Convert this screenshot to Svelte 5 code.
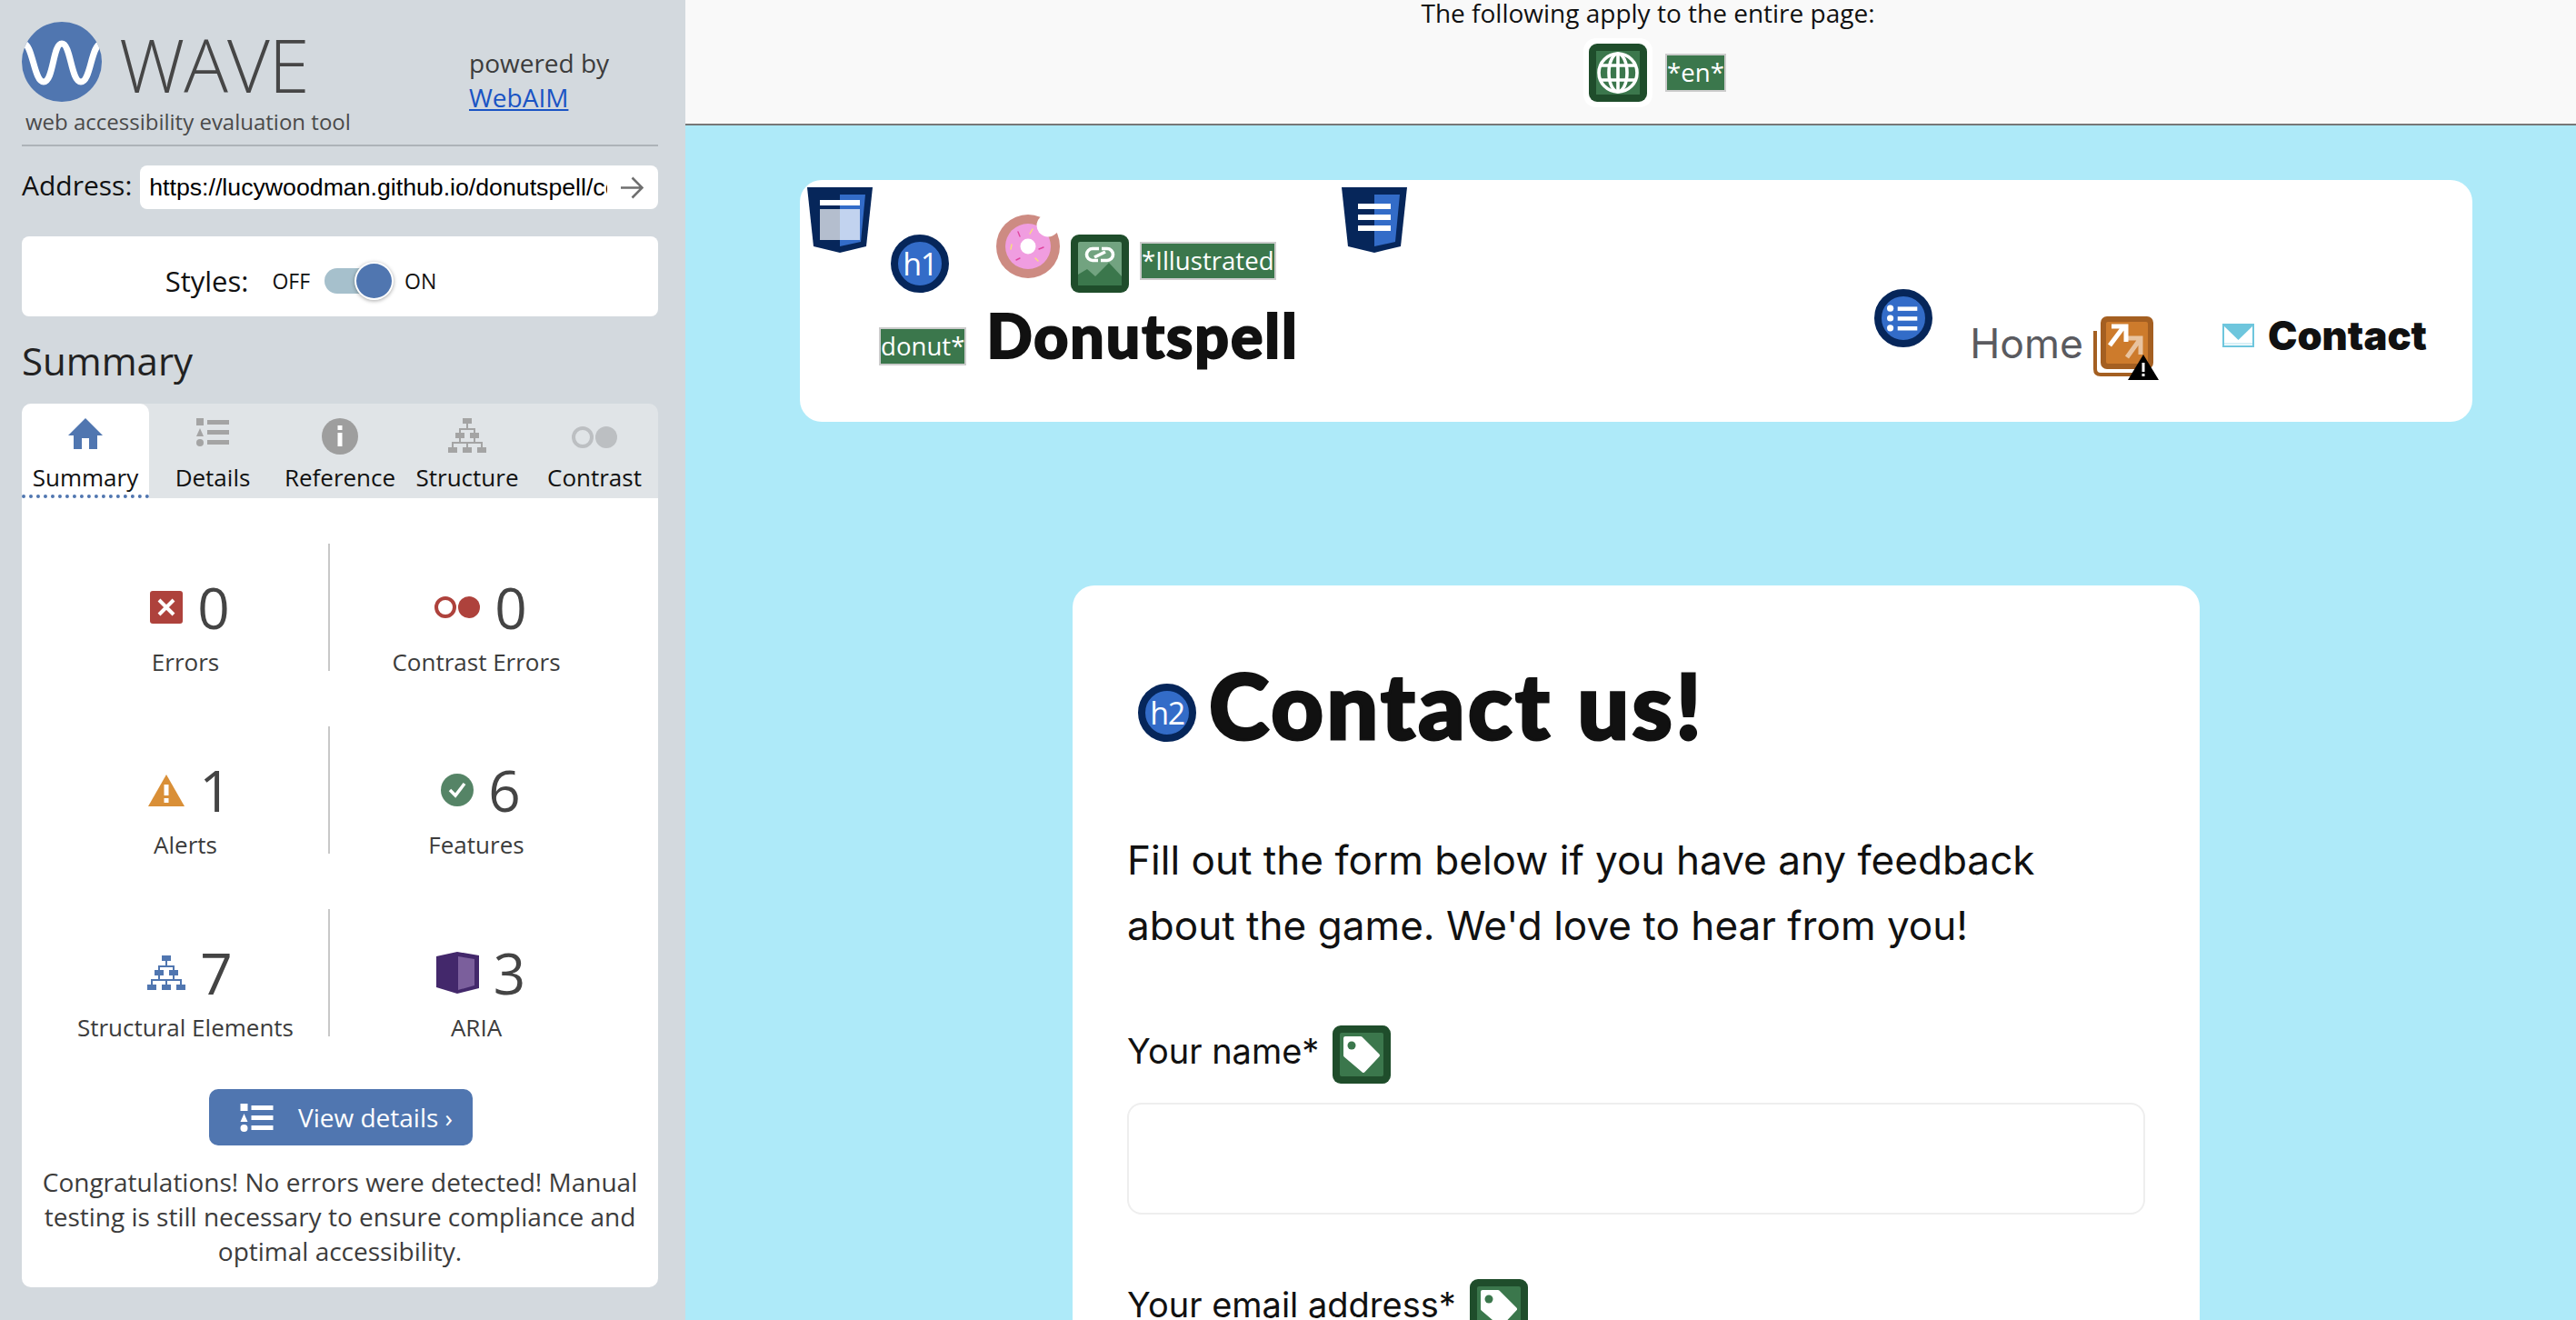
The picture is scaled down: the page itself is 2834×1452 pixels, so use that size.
<script>
	const tabs = ["Summary", "Details", "Reference", "Structure", "Contrast"]
	const stats = [
		{ icon: "error", n: 0, label: "Errors" },
		{ icon: "contrast", n: 0, label: "Contrast Errors" },
		{ icon: "alert", n: 1, label: "Alerts" },
		{ icon: "feature", n: 6, label: "Features" },
		{ icon: "tree", n: 7, label: "Structural Elements" },
		{ icon: "aria", n: 3, label: "ARIA" },
	]
</script>

{#snippet listIcon(w, h)}
	<svg width={w} height={h} viewBox="0 0 36 31" fill="currentColor">
		<rect x="0" y="0" width="8" height="8" />
		<polygon points="4,11 8,20 0,20" />
		<ellipse cx="4" cy="27" rx="4" ry="4" />
		<rect x="12" y="2" width="24" height="5" />
		<rect x="12" y="13" width="24" height="5" />
		<rect x="12" y="24" width="24" height="5" />
	</svg>
{/snippet}

{#snippet treeIcon()}
	<svg width="42" height="38" viewBox="0 0 42 38" fill="currentColor">
		<path d="M21 5V12M13 17V12H29V17M5 33V27H37V33M21 27V33M13 21V27M29 21V27" fill="none" stroke="currentColor" stroke-width="2" />
		<rect x="16" y="0" width="10" height="6" />
		<rect x="8" y="16" width="10" height="6" />
		<rect x="24" y="16" width="10" height="6" />
		<rect x="0" y="32" width="10" height="6" />
		<rect x="16" y="32" width="10" height="6" />
		<rect x="32" y="32" width="10" height="6" />
	</svg>
{/snippet}

{#snippet contrastIcon(color, w, h)}
	<svg width={w} height={h} viewBox="0 0 50 24">
		<circle cx="12" cy="12" r="10" fill="none" stroke={color} stroke-width="4" />
		<circle cx="38" cy="12" r="12" fill={color} />
	</svg>
{/snippet}

{#snippet tagIcon()}
	<svg class="wv" width="64" height="64" viewBox="0 0 64 64">
		<rect width="64" height="64" rx="9" fill="#1f4d2b" />
		<rect x="8" y="8" width="48" height="48" rx="2" fill="#3b774c" />
		<path d="M14 14H31L50 33L34 50L14 33Z" fill="#fff" stroke="#fff" stroke-width="4" stroke-linejoin="round" />
		<circle cx="21" cy="22" r="4.5" fill="#3b774c" />
	</svg>
{/snippet}

<div class="app">
	<aside class="side">
		<div class="brand">
			<div class="brand-left">
				<div class="logo-row">
					<svg width="88" height="88" viewBox="0 0 88 88">
						<clipPath id="lc"><circle cx="44" cy="44" r="44" /></clipPath>
						<circle cx="44" cy="44" r="44" fill="#5076b0" />
						<path d="M1 24C12 22 13 66 24 66C35 66 34 24 44 24C54 24 54 66 65 66C76 66 76 26 87 24" clip-path="url(#lc)" fill="none" stroke="#fff" stroke-width="7" />
					</svg>
					<span class="wave">WAVE</span>
				</div>
				<div class="tagline">web accessibility evaluation tool</div>
			</div>
			<div class="powered">powered by<br /><a href="#top">WebAIM</a></div>
		</div>

		<div class="address">
			<label for="addr">Address:</label>
			<div class="addr-box">
				<input id="addr" value="https://lucywoodman.github.io/donutspell/contact.html" />
				<svg width="26" height="25" viewBox="0 0 26 25" fill="none" stroke="#6f6f6f" stroke-width="2.6">
					<path d="M1 12.5H24M13.5 1.5L24.5 12.5L13.5 23.5" />
				</svg>
			</div>
		</div>

		<div class="styles">
			<span class="styles-label">Styles:</span>
			<span class="onoff">OFF</span>
			<span class="switch"><span class="knob"></span></span>
			<span class="onoff">ON</span>
		</div>

		<h2 class="sum-title">Summary</h2>

		<div class="tabs">
			{#each tabs as t, i}
				<div class="tab" class:active={i === 0}>
					<div class="tab-icon" class:low={i === 4}>
						{#if i === 0}
							<svg width="38" height="34" viewBox="0 0 38 34" fill="#5076b0">
								<path d="M19 0L38 19H32V34H23V22H15V34H6V19H0Z" />
							</svg>
						{:else if i === 1}
							{@render listIcon(36, 31)}
						{:else if i === 2}
							<svg width="40" height="40" viewBox="0 0 40 40">
								<circle cx="20" cy="20" r="20" fill="#9e9e9e" />
								<rect x="17.5" y="8" width="5" height="5" fill="#fff" />
								<rect x="17.5" y="16" width="5" height="15" fill="#fff" />
							</svg>
						{:else if i === 3}
							{@render treeIcon()}
						{:else}
							{@render contrastIcon("#bcbfc2", 50, 24)}
						{/if}
					</div>
					<span>{t}</span>
				</div>
			{/each}
		</div>

		<div class="panel">
			<div class="stats">
				{#each stats as s}
					<div class="stat">
						<div class="stat-top">
							{#if s.icon === "error"}
								<svg width="36" height="36" viewBox="0 0 36 36">
									<rect width="36" height="36" rx="3" fill="#ae423c" />
									<path d="M10 10L26 26M26 10L10 26" stroke="#fff" stroke-width="4" />
								</svg>
							{:else if s.icon === "contrast"}
								{@render contrastIcon("#ae423c", 50, 24)}
							{:else if s.icon === "alert"}
								<svg width="40" height="35" viewBox="0 0 40 35">
									<polygon points="20,0 40,35 0,35" fill="#d98f37" />
									<rect x="17.5" y="11" width="5" height="12" fill="#fff" />
									<rect x="17.5" y="26" width="5" height="5" fill="#fff" />
								</svg>
							{:else if s.icon === "feature"}
								<svg width="36" height="36" viewBox="0 0 36 36">
									<circle cx="18" cy="18" r="18" fill="#558466" />
									<path d="M10 18L16 24L26 11" fill="none" stroke="#fff" stroke-width="3.5" />
								</svg>
							{:else if s.icon === "tree"}
								<span class="blue">{@render treeIcon()}</span>
							{:else}
								<svg width="47" height="46" viewBox="0 0 47 46">
									<polygon points="0,5 23,0 47,4 47,40 23,46 0,39" fill="#43286b" />
									<polygon points="24,5 42,8 42,37 24,42" fill="#7b5f9c" />
								</svg>
							{/if}
							<span class="num">{s.n}</span>
						</div>
						<div class="stat-label">{s.label}</div>
					</div>
				{/each}
			</div>
			<button class="details-btn">
				{@render listIcon(37, 31)}
				<span>View details ›</span>
			</button>
			<p class="congrats">Congratulations! No errors were detected! Manual testing is still necessary to ensure compliance and optimal accessibility.</p>
		</div>
	</aside>

	<main class="main">
		<div class="topbar">
			<div class="topbar-text">The following apply to the entire page:</div>
			<div class="topbar-icons">
				<span class="halo">
					<svg width="64" height="64" viewBox="0 0 64 64">
						<rect width="64" height="64" rx="9" fill="#1f4d2b" />
						<rect x="8" y="8" width="48" height="48" fill="#3b774c" />
						<g fill="none" stroke="#fff" stroke-width="3.6">
							<circle cx="32" cy="32" r="21" />
							<ellipse cx="32" cy="32" rx="10" ry="21" />
							<path d="M32 11V53M13 24H51M13 40H51" />
						</g>
					</svg>
				</span>
				<span class="alt">*en*</span>
			</div>
		</div>

		<div class="page">
			<header class="site-head">
				<svg class="wv shield s1" width="72" height="72" viewBox="0 0 72 72">
					<polygon points="0,0 72,0 65,65 36,72 7,65" fill="#06265a" />
					<polygon points="36,8 64,8 59,60 36,65" fill="#336cc8" />
					<rect x="14" y="14" width="44" height="6" fill="#fff" />
					<rect x="14" y="24" width="44" height="34" fill="#fff" fill-opacity=".7" />
				</svg>
				<svg class="wv shield s2" width="72" height="72" viewBox="0 0 72 72">
					<polygon points="0,0 72,0 65,65 36,72 7,65" fill="#06265a" />
					<polygon points="36,8 64,8 59,60 36,65" fill="#336cc8" />
					<rect x="18" y="18" width="36" height="6" fill="#fff" />
					<rect x="18" y="30" width="36" height="6" fill="#fff" />
					<rect x="18" y="42" width="36" height="6" fill="#fff" />
				</svg>
				<span class="badge b-h1">h1</span>
				<svg class="donut" width="70" height="70" viewBox="0 0 70 70">
					<circle cx="35" cy="35" r="35" fill="#cd8b82" />
					<circle cx="35" cy="35" r="25" fill="#f09de0" />
					<circle cx="35" cy="35" r="8.5" fill="#fff" />
					<circle cx="57" cy="12" r="12.5" fill="#fff" />
					<g stroke-width="1.4" stroke-linecap="round">
						<path d="M24 19L26 24M47 38L52 36M22 50L26 48" stroke="#e0459f" />
						<path d="M37 21L40 16M16 38L17 33M43 48L46 51" stroke="#f7e07a" />
					</g>
				</svg>
				<svg class="wv linkimg" width="64" height="64" viewBox="0 0 64 64">
					<rect width="64" height="64" rx="9" fill="#1f4d2b" />
					<rect x="8" y="8" width="48" height="48" rx="2" fill="#72a380" />
					<path d="M8 56V44L18 38L27 46L42 31L56 46V56Z" fill="#3b774c" />
					<g fill="none" stroke="#fff" stroke-width="3.6">
						<path d="M31 15.5H24a6.5 6.5 0 0 0 0 13H30" />
						<path d="M33 28.5H40a6.5 6.5 0 0 0 0-13H34" />
						<path d="M26 25L38 19" />
					</g>
				</svg>
				<span class="alt alt-ill">*Illustrated</span>
				<span class="badge b-nav">
					<svg width="40" height="32" viewBox="0 0 40 32" fill="#fff">
						<circle cx="4" cy="4" r="4" /><circle cx="4" cy="16" r="4" /><circle cx="4" cy="28" r="4" />
						<rect x="13" y="2" width="24" height="5" /><rect x="13" y="14" width="24" height="5" /><rect x="13" y="26" width="24" height="5" />
					</svg>
				</span>

				<div class="site-brand">
					<span class="alt">donut*</span>
					<h1>Donutspell</h1>
				</div>
				<nav class="site-nav">
					<a class="home" href="#top">Home</a>
					<svg class="wv extlink" width="66" height="66" viewBox="0 0 66 66">
						<path d="M2 16V58Q2 64 8 64H56" fill="none" stroke="#a45f21" stroke-width="4" />
						<rect x="8" y="0" width="58" height="58" rx="7" fill="#a45f21" />
						<rect x="14" y="6" width="46" height="46" rx="2" fill="#cd7b2c" />
						<path d="M18 32L33 12M20 11H36V28" fill="none" stroke="#fff" stroke-width="5" />
						<path d="M37 45L50 27M36 24H52V42" fill="none" stroke="#fff" stroke-opacity=".55" stroke-width="5" />
					</svg>
					<svg class="warn" width="34" height="28" viewBox="0 0 34 28">
						<polygon points="17,0 34,28 0,28" />
						<rect x="15.5" y="9" width="3" height="10" fill="#fff" />
						<rect x="15.5" y="21" width="3" height="3" fill="#fff" />
					</svg>
					<a class="contact" href="#top">
						<svg width="35" height="26" viewBox="0 0 35 26">
							<rect x="1" y="1" width="33" height="24" fill="#fff" stroke="#6ec6dd" stroke-width="2" />
							<polygon points="0,0 35,0 35,1 17.5,18 0,1" fill="#6ec6dd" />
							<rect x="2" y="21" width="31" height="2" fill="#d8f0f6" />
						</svg>
						Contact
					</a>
				</nav>
			</header>

			<section class="card">
				<h2 class="card-title">
					<span class="badge">h2</span>
					Contact us!
				</h2>
				<p class="intro">Fill out the form below if you have any feedback about the game. We'd love to hear from you!</p>
				<div class="field">
					<span class="field-label">Your name* {@render tagIcon()}</span>
					<input class="text" type="text" aria-label="Your name" />
				</div>
				<div class="field">
					<span class="field-label">Your email address* {@render tagIcon()}</span>
				</div>
			</section>
		</div>
	</main>
</div>

<style>
	:global(body) {
		margin: 0;
		overflow: hidden;
	}

	.app {
		display: flex;
		height: 100vh;
		overflow: hidden;
		font-family: "Open Sans", sans-serif;
	}

	/* sidebar */
	.side {
		flex: none;
		box-sizing: border-box;
		width: 754px;
		padding: 24px 30px 0 24px;
		background: #d3d9de;
		color: #111;
	}

	.brand {
		display: flex;
		height: 135px;
		border-bottom: 2px solid #adb3b8;
	}

	.brand-left {
		width: 492px;
	}

	.logo-row {
		display: flex;
		align-items: center;
		gap: 19px;
		height: 88px;
	}

	.wave {
		padding-top: 5px;
		font-size: 81px;
		font-weight: 300;
		line-height: 88px;
		color: #464646;
		letter-spacing: -1px;
	}

	.tagline {
		margin: 4px 0 0 4px;
		font-size: 24px;
		line-height: 36px;
		color: #4a4a4a;
		white-space: nowrap;
	}

	.powered {
		padding-top: 26px;
		font-size: 28px;
		line-height: 38px;
		color: #3c3c3c;
	}

	.powered a {
		color: #1a54c4;
	}

	.address {
		display: flex;
		align-items: center;
		gap: 9px;
		margin-top: 21px;
		font-size: 30px;
	}

	.address label {
		margin-top: -5px;
	}

	.addr-box {
		flex: 1;
		display: flex;
		align-items: center;
		box-sizing: border-box;
		height: 48px;
		padding: 0 16px 0 10px;
		border-radius: 8px;
		background: #fff;
	}

	.addr-box input {
		flex: 1;
		min-width: 0;
		margin-right: 14px;
		padding: 0;
		border: 0;
		outline: 0;
		background: none;
		font: 26.7px "Liberation Sans", sans-serif;
		color: #000;
	}

	.styles {
		display: flex;
		align-items: center;
		justify-content: center;
		box-sizing: border-box;
		height: 88px;
		margin-top: 30px;
		padding: 10px 86px 0 0;
		border-radius: 8px;
		background: #fff;
	}

	.styles-label {
		margin-right: 26px;
		font-size: 31px;
	}

	.onoff {
		font-size: 23px;
	}

	.switch {
		position: relative;
		width: 74px;
		height: 28px;
		margin: 0 14px 0 16px;
		border-radius: 14px;
		background: #a6c0cc;
	}

	.knob {
		position: absolute;
		top: -7px;
		right: -2px;
		box-sizing: border-box;
		width: 43px;
		height: 42px;
		border: 2px solid #fff;
		border-radius: 50%;
		background: #5076b0;
		box-shadow: 0 1px 4px rgba(0, 0, 0, 0.35);
	}

	.sum-title {
		margin: 0;
		height: 96px;
		font-size: 42px;
		font-weight: 400;
		line-height: 98px;
		color: #222;
	}

	.tabs {
		display: grid;
		grid-template-columns: repeat(5, 140px);
		height: 104px;
		border-radius: 10px 10px 0 0;
		background: #e0e4e7;
	}

	.tab {
		display: flex;
		flex-direction: column;
		align-items: center;
		padding-top: 16px;
		box-sizing: border-box;
		font-size: 26px;
		line-height: 36px;
		color: #111;
	}

	.tab.active {
		border-radius: 10px 10px 0 0;
		border-bottom: 4px dotted #5076b0;
		background: #fff;
	}

	.tab-icon {
		display: flex;
		align-items: flex-start;
		height: 42px;
		margin-bottom: 5px;
		color: #a4a4a4;
	}

	.tab-icon.low {
		align-items: center;
	}

	.panel {
		height: 868px;
		box-sizing: border-box;
		padding-top: 50px;
		border-radius: 0 0 10px 10px;
		background: #fff;
		color: #3c3c3c;
	}

	.stats {
		display: grid;
		grid-template-columns: 314px 324px;
		row-gap: 61px;
		margin-left: 23px;
	}

	.stat {
		height: 140px;
		padding-top: 30px;
		box-sizing: border-box;
		text-align: center;
	}

	.stat:nth-child(even) {
		border-left: 2px solid #c8c8c8;
	}

	.stat-top {
		display: flex;
		align-items: center;
		justify-content: center;
		gap: 16px;
		height: 80px;
		padding-left: 10px;
	}

	.blue {
		display: flex;
		color: #5076b0;
	}

	.num {
		font-size: 62px;
		line-height: 80px;
		color: #444;
	}

	.stat-label {
		margin-top: 2px;
		font-size: 26px;
		line-height: 36px;
	}

	.details-btn {
		display: flex;
		align-items: center;
		gap: 27px;
		box-sizing: border-box;
		width: 290px;
		height: 62px;
		margin: 58px 0 0 206px;
		padding: 0 0 0 34px;
		border: 0;
		border-radius: 10px;
		background: #5076b0;
		color: #fff;
		font: 28px "Open Sans", sans-serif;
	}

	.congrats {
		margin: 21px 14px 0;
		font-size: 28px;
		line-height: 38px;
		text-align: center;
	}

	/* page under test */
	.main {
		flex: 1;
		min-width: 0;
		background: #aeeaf9;
	}

	.topbar {
		box-sizing: border-box;
		height: 138px;
		padding-left: 38px;
		border-bottom: 2px solid #777;
		background: #f9f9f9;
		text-align: center;
	}

	.topbar-text {
		font-size: 28px;
		line-height: 28px;
		color: #111;
	}

	.topbar-icons {
		display: flex;
		align-items: center;
		justify-content: center;
		gap: 14px;
		margin: 14px 0 0 15px;
	}

	.halo {
		display: flex;
		padding: 6px;
		border-radius: 14px;
		background: #fff;
	}

	.alt {
		display: inline-block;
		box-sizing: border-box;
		height: 42px;
		padding: 0;
		border: 2px solid #ccc;
		background: #3b774c;
		color: #fff;
		font: 27.6px/36px "Open Sans", sans-serif;
		white-space: nowrap;
	}

	.page {
		padding: 60px 114px 0 126px;
		font-family: Inter, sans-serif;
		color: #111;
	}

	.site-head {
		position: relative;
		display: flex;
		justify-content: space-between;
		box-sizing: border-box;
		height: 266px;
		padding: 0 50px 0 87px;
		border-radius: 24px;
		background: #fff;
	}

	.wv {
		position: absolute;
		display: block;
	}

	.s1 {
		left: 8px;
		top: 8px;
	}

	.s2 {
		left: 596px;
		top: 8px;
	}

	.donut {
		position: absolute;
		left: 216px;
		top: 38px;
	}

	.linkimg {
		left: 298px;
		top: 60px;
	}

	.alt-ill {
		position: absolute;
		left: 374px;
		top: 68px;
	}

	.badge {
		display: inline-flex;
		align-items: center;
		justify-content: center;
		box-sizing: border-box;
		flex: none;
		width: 64px;
		height: 64px;
		border: 8px solid #06265a;
		border-radius: 50%;
		background: #336cc8;
		color: #fff;
		font: 400 34px "Open Sans", sans-serif;
		letter-spacing: -1.5px;
	}

	.b-h1 {
		position: absolute;
		left: 100px;
		top: 60px;
	}

	.b-nav {
		position: absolute;
		left: 1182px;
		top: 120px;
	}

	.b-nav svg {
		width: 36px;
	}

	.site-brand {
		display: flex;
		align-items: flex-start;
		gap: 22px;
		padding-top: 162px;
	}

	.site-brand h1 {
		margin: -31px 0 0;
		font: 900 66px/80px Lato, sans-serif;
		color: #111;
		letter-spacing: 2px;
		-webkit-text-stroke: 2px #111;
	}

	.site-nav {
		position: relative;
		display: flex;
		align-items: flex-start;
		padding-top: 146px;
	}

	.home {
		margin-right: 153px;
		padding-top: 9px;
		font-size: 44.5px;
		line-height: 50px;
		color: #5a5a5f;
		text-decoration: none;
	}

	.extlink {
		left: 136px;
		top: 150px;
	}

	.warn {
		position: absolute;
		left: 174px;
		top: 192px;
	}

	.contact {
		display: flex;
		align-items: center;
		gap: 15px;
		font-size: 43.5px;
		font-weight: 900;
		line-height: 50px;
		color: #111;
		text-decoration: none;
	}

	.card {
		box-sizing: border-box;
		width: 1240px;
		height: 900px;
		margin: 180px 0 0 300px;
		padding: 70px 60px;
		border-radius: 24px;
		background: #fff;
	}

	.card-title {
		display: flex;
		align-items: flex-end;
		gap: 14px;
		margin: 0 0 0 12px;
		font: 900 100px/120px Lato, sans-serif;
		color: #111;
		letter-spacing: 3.5px;
		-webkit-text-stroke: 3px #111;
	}

	.card-title .badge {
		margin-bottom: 18px;
		-webkit-text-stroke: 0;
	}

	.intro {
		width: 1060px;
		margin: 76px 0 0;
		font-size: 44.1px;
		line-height: 72px;
	}

	.intro + .field {
		margin-top: 74px;
	}

	.field {
		margin-top: 71px;
	}

	.field-label {
		position: relative;
		display: block;
		font-size: 38px;
		line-height: 50px;
		height: 50px;
	}

	.field-label :global(svg) {
		position: static;
		display: inline-block;
		margin: 0 0 0 4px;
		vertical-align: middle;
	}

	.text {
		display: block;
		box-sizing: border-box;
		width: 1120px;
		height: 123px;
		margin-top: 35px;
		border: 2px solid #eee;
		border-radius: 16px;
		background: #fff;
	}
</style>
